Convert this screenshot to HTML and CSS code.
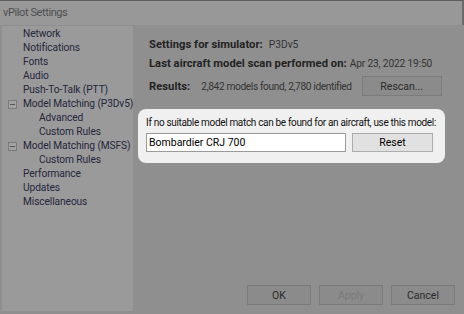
FILE: index.html
```html
<!DOCTYPE html>
<html>
<head>
<meta charset="utf-8">
<link rel="stylesheet" href="styles.css">
</head>
<body>
<div class="window">
  <div class="titlebar">vPilot Settings</div>
  <div class="main">
    <div class="tree">
      <div class="node l1">Network</div>
      <div class="node l1">Notifications</div>
      <div class="node l1">Fonts</div>
      <div class="node l1">Audio</div>
      <div class="node l1">Push-To-Talk (PTT)</div>
      <div class="node exp"><span class="box"></span>Model Matching (P3Dv5)</div>
      <div class="node l2">Advanced</div>
      <div class="node l2">Custom Rules</div>
      <div class="node exp"><span class="box"></span>Model Matching (MSFS)</div>
      <div class="node l2">Custom Rules</div>
      <div class="node l1">Performance</div>
      <div class="node l1">Updates</div>
      <div class="node l1">Miscellaneous</div>
    </div>
    <div class="content">
      <div class="row r1"><b>Settings for simulator:</b><span class="val v1">P3Dv5</span></div>
      <div class="row r2"><b>Last aircraft model scan performed on:</b><span class="val v2">Apr 23, 2022 19:50</span></div>
      <div class="row r3"><b>Results:</b><span class="val v3">2,842 models found, 2,780 identified</span><span class="btn dim rescan">Rescan...</span></div>
      <div class="spot">
        <div class="spot-label">If no suitable model match can be found for an aircraft, use this model:</div>
        <div class="spot-row">
          <div class="input">Bombardier CRJ 700</div>
          <div class="btn light reset">Reset</div>
        </div>
      </div>
      <div class="spacer"></div>
      <div class="footer">
        <span class="btn dim fbtn">OK</span>
        <span class="btn dim fbtn disabled">Apply</span>
        <span class="btn dim fbtn">Cancel</span>
      </div>
    </div>
  </div>
</div>
</body>
</html>
```
FILE: styles.css
```css
* { box-sizing: border-box; }
html, body { margin: 0; padding: 0; }
body {
  width: 464px;
  height: 314px;
  overflow: hidden;
  background: #8f8f8f;
  font-family: Roboto, "Noto Sans", sans-serif;
  font-size: 10px;
  color: #2a2a33;
}
.window {
  width: 464px;
  height: 314px;
  display: flex;
  flex-direction: column;
}
.titlebar {
  height: 25px;
  flex-shrink: 0;
  background: #989898;
  border-top: 1px solid #5e5e5e;
  border-right: 2px solid #6a6a6a;
  color: #4e4e4e;
  font-size: 11px;
  letter-spacing: -0.4px;
  line-height: 23px;
  padding-left: 3px;
}
.main {
  flex: 1;
  display: flex;
  min-height: 0;
  padding: 1px 0 3px 2px;
}
.tree {
  width: 131px;
  flex-shrink: 0;
  background: #9a9a9a;
  padding-top: 1px;
}
.node {
  height: 14px;
  line-height: 14px;
  white-space: nowrap;
  color: #25253a;
  font-size: 10.2px;
  letter-spacing: -0.1px;
}
.l1 { padding-left: 21px; }
.l2 { padding-left: 37px; }
.exp { padding-left: 6px; display: flex; align-items: center; }
.box {
  flex-shrink: 0;
  width: 9px;
  height: 9px;
  border: 1px solid #7a7a7a;
  background: #a2a2a2;
  margin-right: 6px;
  position: relative;
}
.box::after {
  content: "";
  position: absolute;
  left: 1px;
  right: 1px;
  top: 3px;
  height: 1px;
  background: #555;
}
.content {
  flex: 1;
  min-width: 0;
  display: flex;
  flex-direction: column;
  padding: 9px 9px 0 5px;
}
.row {
  display: flex;
  align-items: center;
  padding-left: 11px;
  white-space: nowrap;
  color: #222;
}
.row b { font-weight: 700; font-size: 11.2px; letter-spacing: 0.05px; }
.r1 { height: 19px; }
.r2 { height: 19px; }
.r3 { height: 26px; }
.val { color: #333; font-size: 10.2px; }
.v1 { margin-left: 6px; }
.v2 { margin-left: 3px; letter-spacing: -0.15px; }
.v3 { margin-left: 11px; letter-spacing: -0.38px; }
.btn {
  display: flex;
  flex-shrink: 0;
  align-items: center;
  justify-content: center;
  height: 20px;
  border: 1px solid #7b7b7b;
  font-size: 10.5px;
}
.dim { background: #8b8b8b; color: #2a2a2a; }
.rescan { width: 80px; margin-left: 10px; }
.spot {
  margin-top: 10px;
  width: 307px;
  flex-shrink: 0;
  background: #f0f0f0;
  border-radius: 8px;
  padding: 7px 0 0 8px;
  height: 54px;
}
.spot-label {
  color: #111;
  white-space: nowrap;
  letter-spacing: -0.33px;
  height: 17px;
  line-height: 14px;
}
.spot-row { display: flex; gap: 6px; }
.input {
  width: 200px;
  flex-shrink: 0;
  height: 19px;
  background: #fff;
  border: 1px solid #9a9a9a;
  line-height: 17px;
  padding-left: 2px;
  color: #000;
  font-size: 10.5px;
}
.light {
  width: 81px;
  height: 19px;
  background: #e1e1e1;
  border: 1px solid #adadad;
  color: #000;
}
.spacer { flex: 1; }
.footer {
  display: flex;
  justify-content: flex-end;
  gap: 8px;
  padding-bottom: 6px;
}
.fbtn { width: 64px; height: 20px; }
.disabled { color: #7a7a7a; }
```
